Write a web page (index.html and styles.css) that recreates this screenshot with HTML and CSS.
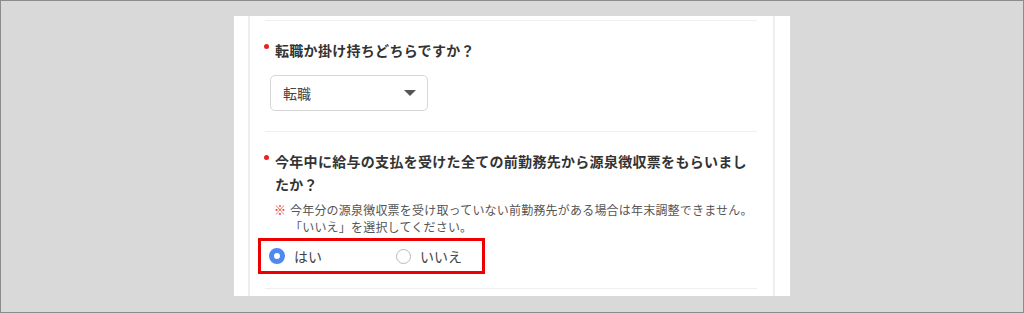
FILE: index.html
```html
<!DOCTYPE html>
<html lang="ja">
<head>
  <meta charset="UTF-8" />
  <meta name="viewport" content="width=device-width, initial-scale=1.0"/>
  <title>年末調整</title>
  <link rel="stylesheet" href="styles.css">
</head>
<body>
  <div class="frame">
    <div class="panel">
      <div class="sheet">

        <!-- 質問1 -->
        <div class="question">
          <div class="q-title">転職か掛け持ちどちらですか？</div>
          <div class="select">
            <span>転職</span>
            <span class="caret"></span>
          </div>
        </div>

        <!-- 質問2 -->
        <div class="question q2">
          <div class="q-title">今年中に給与の支払を受けた全ての前勤務先から源泉徴収票をもらいましたか？</div>
          <div class="note">
            <span class="mark">※</span>
            <span>今年分の源泉徴収票を受け取っていない前勤務先がある場合は年末調整できません。<br>「いいえ」を選択してください。</span>
          </div>
          <div class="answer">
            <label class="radio checked"><span class="circle"></span>はい</label>
            <label class="radio"><span class="circle"></span>いいえ</label>
          </div>
        </div>

      </div>
    </div>
  </div>
</body>
</html>
```

FILE: styles.css
```css
html, body {
  margin: 0;
  padding: 0;
}

body {
  font-family: "Noto Sans CJK JP", "Noto Sans", sans-serif;
  color: #333;
  background-color: #d9d9d9;
}

.frame {
  box-sizing: border-box;
  width: 1024px;
  height: 313px;
  border: 1px solid #8c8c8c;
  padding-top: 15px;
}

.panel {
  margin-left: 233px;
  width: 527px;
  height: 280px;
  background-color: #fff;
  padding: 0 15px 0 14px;
}

.sheet {
  box-sizing: border-box;
  height: 280px;
  border-left: 2px solid #eeeeee;
  border-right: 2px solid #eeeeee;
  padding: 4px 16px 0 15px;
}

.question {
  border-top: 1px solid #f0f0f0;
  padding-top: 18px;
  padding-bottom: 20px;
}

.q-title {
  position: relative;
  padding-left: 10px;
  font-size: 14px;
  font-weight: bold;
  line-height: 22px;
  letter-spacing: 0.3px;
  color: #333;
}

.q-title::before {
  content: "";
  position: absolute;
  left: -1px;
  top: 5px;
  width: 5px;
  height: 5px;
  border-radius: 50%;
  background-color: #e8231c;
}

.select {
  box-sizing: border-box;
  display: flex;
  align-items: center;
  justify-content: space-between;
  width: 158px;
  height: 36px;
  margin: 14px 0 0 5px;
  padding: 0 11px 0 12px;
  border: 1px solid #d6d6d6;
  border-radius: 5px;
  font-size: 14px;
  color: #444;
}

.caret {
  width: 0;
  height: 0;
  border-left: 6px solid transparent;
  border-right: 6px solid transparent;
  border-top: 6px solid #555;
}

.q2 {
  padding-bottom: 14px;
  border-bottom: 1px solid #f0f0f0;
}

.q2 .q-title {
  line-height: 23px;
}

.note {
  display: flex;
  margin-top: 5px;
  padding-left: 9px;
  font-size: 12px;
  line-height: 17px;
  letter-spacing: 0.2px;
  color: #555;
}

.note .mark {
  flex: none;
  width: 16px;
  color: #e8231c;
}

.answer {
  display: flex;
  align-items: center;
  width: 213px;
  height: 30px;
  margin: 3px 0 0 -7px;
  padding-left: 8px;
  border: 3px solid #ee0000;
}

.radio {
  flex: none;
  display: flex;
  align-items: center;
  gap: 9px;
  font-size: 14px;
  color: #444;
}

.radio:first-child {
  width: 127px;
}

.circle {
  box-sizing: border-box;
  width: 15px;
  height: 15px;
  border-radius: 50%;
  border: 1px solid #b9b9b9;
  background-color: #fff;
}

.radio.checked .circle {
  width: 16px;
  height: 16px;
  border: 5px solid #4f88ee;
  background-color: #fff;
}
```
